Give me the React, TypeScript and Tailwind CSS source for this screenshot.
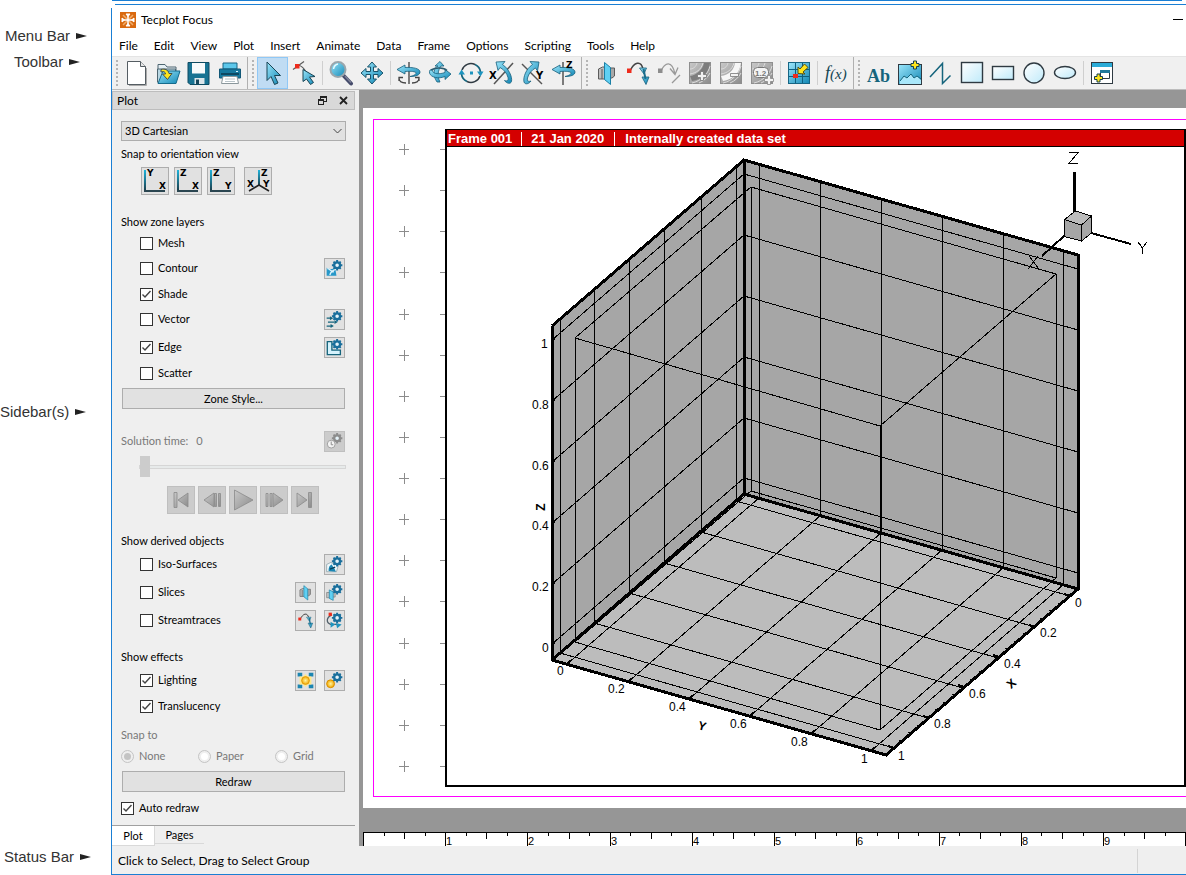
import type { ReactNode } from "react";

type Point = [number, number];

const menus = ["File", "Edit", "View", "Plot", "Insert", "Animate", "Data", "Frame", "Options", "Scripting", "Tools", "Help"];

const INK = "#2f3a42";
const TEAL = "#15647c";

/* ---------- shared svg bits ---------- */

function Gradients() {
  return (
    <svg width="0" height="0" className="absolute" aria-hidden="true">
      <defs>
        <linearGradient id="cyan" x1="0" y1="0" x2="1" y2="1">
          <stop offset="0" stopColor="#9be6fb" />
          <stop offset="1" stopColor="#1187b5" />
        </linearGradient>
        <linearGradient id="ice" x1="0" y1="0" x2="1" y2="1">
          <stop offset="0" stopColor="#ffffff" />
          <stop offset="1" stopColor="#bfeafa" />
        </linearGradient>
        <linearGradient id="gray" x1="0" y1="0" x2="1" y2="1">
          <stop offset="0" stopColor="#c9c9c9" />
          <stop offset="1" stopColor="#8b8b8b" />
        </linearGradient>
        <linearGradient id="axis" x1="0" y1="0" x2="0" y2="1">
          <stop offset="0" stopColor="#1fb4dc" />
          <stop offset="1" stopColor="#1b3a47" />
        </linearGradient>
        <radialGradient id="sun">
          <stop offset="0" stopColor="#fff3a0" />
          <stop offset="1" stopColor="#f2a900" />
        </radialGradient>
      </defs>
    </svg>
  );
}

function Icon({ children, size = 26 }: { children: ReactNode; size?: number }) {
  return (
    <svg width={size} height={size} viewBox="0 0 26 26" fill="none" aria-hidden="true" className="shrink-0">
      {children}
    </svg>
  );
}

function Gear({ x, y, color = "#1a6f9c" }: { x: number; y: number; color?: string }) {
  return (
    <g stroke={color}>
      <path
        d={`M${x - 8} ${y}h16M${x} ${y - 8}v16M${x - 5.5} ${y - 5.5}l11 11M${x + 5.5} ${y - 5.5}l-11 11`}
        strokeWidth="3"
      />
      <circle cx={x} cy={y} r="4.500" fill="#e4f2f8" strokeWidth="3.500" />
    </g>
  );
}

function Plus({ x, y }: { x: number; y: number }) {
  return (
    <path
      d={`M${x - 1.5} ${y - 4}h3v2.500h2.500v3h-2.500v2.500h-3v-2.500h-2.500v-3h2.500z`}
      fill="#fde51d"
      stroke="#17404e"
      strokeWidth="1"
    />
  );
}

/* ---------- toolbar icons ---------- */

const pageIcon = (
  <>
    <path d="M3.500 1.500h13l5 5v18h-18z" fill="#fff" stroke="#555d63" />
    <path d="M16.500 1.500v5h5" fill="#e6e6e6" stroke="#555d63" />
    <path d="M22.500 8v17.500H5" stroke="#aaa" />
  </>
);

const openIcon = (
  <>
    <path d="M3 21V4.500h7l2 2.500h9v4" fill="#e5eff4" stroke="#4e6570" />
    <path d="M2.500 22.500V9h18v4" fill="#b8d7e3" stroke="#4e6570" />
    <path d="M3 23.500L8 11h17l-4 12.500z" fill="url(#cyan)" stroke="#156b8c" />
    <path d="M6 9.500c4-1 7 0 8 4h3l-4.500 6-5-5.500h3c0-2-2-3-4.500-2z" fill="#fde51d" stroke="#44504c" />
  </>
);

const saveIcon = (
  <>
    <path d="M2 2.500h21v22H4l-2-2z" fill="#187393" stroke="#0f4b62" />
    <path d="M6 3h13v10.500H6z" fill="#f7fafb" />
    <path d="M8.500 18h10v6h-10z" fill="#dce6ea" />
    <path d="M10 19.500h3V24h-3z" fill="#16465a" />
  </>
);

const printIcon = (
  <>
    <path d="M6 3h14v6H6z" fill="#5cc7ea" stroke="#166584" />
    <path d="M2.500 9h21v9h-21z" fill="#15789e" stroke="#125877" />
    <path d="M4 14h18" stroke="#0c4862" strokeWidth="2" />
    <path d="M6 16.500h14l1.500 7h-17z" fill="#fff" stroke="#8b979c" />
    <path d="M8 19h10M8 21.500h10" stroke="#b9c4c9" />
    <path d="M19 11.500h2" stroke="#d7f4ff" />
  </>
);

const selectIcon = <path d="M7 2v18.500l4-4 3.500 8 3.500-1.500-3.500-7.500h6z" fill="url(#cyan)" stroke="#194454" />;

const adjustIcon = (
  <>
    <path d="M2 9.500l11-8M7 5c4 1 6 3 8 7" stroke="#5b5b5b" strokeWidth="1.200" />
    <path d="M4 4h4.500v4.500H4z" fill="#ee2b1c" />
    <path d="M12 9.500v12l3.500-2.500 4 5.500 3-2-4-5.500 5.500-.5z" fill="url(#cyan)" stroke="#194454" />
  </>
);

const zoomIcon = (
  <>
    <path d="M15 15l8 8.500" stroke="#454b6b" strokeWidth="4" strokeLinecap="round" />
    <path d="M17 16l6 6.500" stroke="#7c8097" strokeWidth="1.500" />
    <circle cx="10" cy="9.500" r="7.500" fill="url(#cyan)" stroke="#9aa6ac" strokeWidth="2" />
    <path d="M5.500 9c.5-3 2-4.500 4.500-5" stroke="#e8fbff" strokeWidth="1.500" />
  </>
);

const moveIcon = (
  <path
    d="M13 2l4.500 5h-3v4.500H19v-3l5 4.500-5 4.500v-3h-4.500V19h3L13 24l-4.500-5h3v-4.500H7v3L2 13l5-4.500v3h4.500V7h-3z"
    fill="url(#cyan)"
    stroke="#19536a"
  />
);

const ribbonLeft = (
  <path
    d="M1 9.500l8-4.500v2.500c8-.5 15 1 15 4.500 0 3-4 4.500-10 4.500 4-1 6-2 6-3.500C20 11.500 15 11 9 11.500V14z"
    fill="url(#cyan)"
    stroke="#175f7c"
    strokeWidth=".8"
  />
);

const tiltIcon = (
  <>
    <path d="M13 2v22" stroke="#555" strokeWidth="1.500" />
    {ribbonLeft}
    <path d="M3 18c0 4 3 5 7 5M7 17.500H3v3.500M23 18c0 4-3 5-7 5M19 17.500h4v3.500" stroke="#444" strokeWidth="1.300" />
  </>
);

const sphereIcon = (
  <>
    <path d="M10 22C5 15 7 7 11 6H8l5-4.500L17 6h-3c-3 4-4 10-1 16z" fill="url(#cyan)" stroke="#175f7c" strokeWidth=".8" />
    <path
      d="M3 10c-3 6 7 10 15 6.500v3l6-5.500-6-4.500v3C11 15 4 13.500 6 9.500z"
      fill="url(#cyan)"
      stroke="#175f7c"
      strokeWidth=".8"
    />
    <path d="M4 10c5-3 13-2.500 16 .5" stroke="#2c5c70" strokeWidth="1.500" />
  </>
);

const rollIcon = (
  <>
    <path d="M4 10a9.500 9.500 0 0 1 13-5.500M22 16a9.500 9.500 0 0 1-13 5.500" stroke={INK} strokeWidth="1.500" />
    <path d="M17 4.500a9.500 9.500 0 0 1 5.500 7.500M9 21.500a9.500 9.500 0 0 1-5.500-7.500" stroke={TEAL} strokeWidth="1.800" />
    <path d="M19 11.500h6.500l-3 5zM.5 14.500H7l-3.500-5z" fill="#1d94bf" />
    <path d="M12 11.500h3v3h-3z" fill="#1d94bf" />
  </>
);

const rotXIcon = (
  <>
    <path d="M24 3L5 24" stroke="#555" strokeWidth="1.500" />
    <path
      d="M7 2l9-.5-2.500 3c6 4 10 12 9 17-1 3-5 2-7-1 3 1 4 0 3.500-3-1-4-4-8-8-10l-2 3z"
      fill="url(#cyan)"
      stroke="#175f7c"
      strokeWidth=".8"
    />
    <text x="0" y="19" fontSize="10" fontWeight="700" fontFamily="DejaVu Sans" fill="#000">X</text>
  </>
);

const rotYIcon = (
  <>
    <path d="M2 4l20 20" stroke="#555" strokeWidth="1.500" />
    <path
      d="M19 2l-9-.5 2.500 3C6 9 3 17 4 22c1 3 5 2 7-1-3 1-4 0-3.500-3 1-4 4-8 8-10l2 3z"
      fill="url(#cyan)"
      stroke="#175f7c"
      strokeWidth=".8"
    />
    <text x="16" y="19" fontSize="10" fontWeight="700" fontFamily="DejaVu Sans" fill="#000">Y</text>
  </>
);

const rotZIcon = (
  <>
    <path d="M12 2v23" stroke="#555" strokeWidth="1.500" />
    {ribbonLeft}
    <text x="15" y="8" fontSize="9" fontWeight="700" fontFamily="DejaVu Sans" fill="#000">Z</text>
  </>
);

const sliceIcon = (
  <>
    <path d="M4.500 9l4-2h5v11l-3 1h-6z" fill="#bdbdbd" stroke="#5b5b5b" />
    <path d="M8 9v10" stroke="#5b5b5b" />
    <path d="M15 8h5.500v8L18 18h-3z" fill="#a8a8a8" stroke="#5b5b5b" />
    <path d="M10.500 2.500l6 5v17l-6-5z" fill="#5fd0f3" stroke="#1a7fa5" />
  </>
);

const streamIcon = (
  <>
    <path d="M5 11C9 2 16 0 18 9" stroke="#444" strokeWidth="1.500" />
    <path d="M2 8.500h4.500V13H2z" fill="#ee2b1c" />
    <path d="M14.500 8h7l-2.500 6zM17 17h7l-3 7.500z" fill="url(#cyan)" stroke="#175f7c" strokeWidth=".8" />
    <path d="M18.500 9l2 10" stroke="#1b6d8c" strokeWidth="2" />
  </>
);

const streamOffIcon = (
  <>
    <path d="M5 11C9 2 16 0 19 14M14 8.500l5 6 3-7M16 23l8-8" stroke="#999" strokeWidth="1.300" />
    <path d="M2 8.500h4.500V13H2z" fill="#8d8d8d" />
  </>
);

const tile = (
  <>
    <rect x="2.500" y="2.500" width="21" height="21" fill="url(#gray)" stroke="#8e8e8e" />
    <path d="M3 9c3 0 6-2 7-6M3 14c6-1 11-4 13-11M5 23c9-2 16-9 18-17M12 23c5-2 9-6 11-10" stroke="#dcdcdc" />
  </>
);

const addLevelIcon = (
  <>
    {tile}
    <path d="M17 3h6C22 12 15 20 5 21l-2-5C10 15 16 9 17 3z" fill="#7d7d7d" />
    <path d="M13.500 11.500h3v3h3v3h-3v3h-3v-3h-3v-3h3z" fill="#f2f2f2" stroke="#777" strokeWidth=".8" />
  </>
);

const removeLevelIcon = (
  <>
    {tile}
    <path d="M17 3h6C22 12 15 20 5 21l-2-5c8-1 13-6 14-13z" fill="#f7f7f7" />
    <path d="M12.500 13.500h8v3h-8z" fill="#f2f2f2" stroke="#777" strokeWidth=".8" />
  </>
);

const labelLevelIcon = (
  <>
    {tile}
    <rect x="4.500" y="7.500" width="15" height="10" rx="4" fill="#f4f4f4" stroke="#777" />
    <text x="6" y="16" fontSize="8" fontFamily="Liberation Sans" fontWeight="700" fill="#777">1.2</text>
    <path d="M18.500 15.500h3v3h3v3h-3v3h-3v-3h-3v-3h3z" fill="#f2f2f2" stroke="#888" strokeWidth=".8" />
  </>
);

const probeIcon = (
  <>
    <rect x="2.500" y="2.500" width="21" height="21" fill="url(#cyan)" stroke="#166584" />
    <path d="M9.500 3v20M16.500 3v20M3 9.500h20M3 16.500h20" stroke="#0d5f80" />
    <path d="M7 14h5v4H7z" fill="#ee2b1c" />
    <path d="M12 13.500V7l2 2 4.500-5 3.500 3.500-5 4.500 2 2z" fill="#fde51d" stroke="#59500f" />
  </>
);

const fxIcon = (
  <text x="2" y="19" fontSize="18" fontStyle="italic" fontFamily="Liberation Serif" fill="#124452">
    f<tspan fontSize="15">(x)</tspan>
  </text>
);

const textIcon = (
  <text x="1" y="22" fontSize="18" fontWeight="700" fontFamily="Liberation Serif" fill={TEAL}>Ab</text>
);

const imageIcon = (
  <>
    <rect x="1.500" y="4.500" width="23" height="20" fill="url(#cyan)" stroke={INK} />
    <path d="M3 21l4-5 3 2 4-4 3 4 3-2 4 4v4H3z" fill="#a9e7fa" />
    <path d="M3 21l4-5 3 2 4-4 3 4 3-2 4 3" stroke={TEAL} />
    <Plus x={18} y={5} />
  </>
);

const polylineIcon = <path d="M2 17L14.500 3.500V23.500L22.500 15.500" stroke={TEAL} strokeWidth="1.500" />;
const squareIcon = <rect x="2.500" y="2.500" width="21" height="20" fill="url(#ice)" stroke={INK} strokeWidth="1.400" />;
const rectIcon = <rect x="2.500" y="6.500" width="21" height="13" fill="url(#ice)" stroke={INK} strokeWidth="1.400" />;
const circleIcon = <circle cx="13" cy="13" r="10" fill="url(#ice)" stroke={INK} strokeWidth="1.400" />;
const ellipseIcon = <ellipse cx="13" cy="12.500" rx="10.500" ry="6" fill="url(#ice)" stroke={INK} strokeWidth="1.400" />;

const newFrameIcon = (
  <>
    <rect x="2.500" y="2.500" width="21" height="21" fill="#fff" stroke={INK} />
    <path d="M3 3h20v4H3z" fill="#2cacd8" />
    <path d="M11.500 10.500h9v8h-9z" fill="#fff" stroke={INK} />
    <path d="M11 10h10v3H11z" fill="#20799b" />
    <Plus x={9.500} y={18} />
  </>
);

type Tool = { name: string; icon: ReactNode; active?: boolean; off?: boolean };
type ToolItem = Tool | "line" | "grip";

const tools: ToolItem[] = [
  { name: "New layout", icon: pageIcon },
  { name: "Open layout", icon: openIcon },
  { name: "Save layout", icon: saveIcon },
  { name: "Print", icon: printIcon },
  "grip",
  { name: "Selector", icon: selectIcon, active: true },
  { name: "Adjustor", icon: adjustIcon },
  "line",
  { name: "Zoom", icon: zoomIcon },
  { name: "Translate", icon: moveIcon },
  "line",
  { name: "Rotate rollerball", icon: tiltIcon },
  { name: "Rotate spherical", icon: sphereIcon },
  { name: "Rotate twist", icon: rollIcon },
  { name: "Rotate about X", icon: rotXIcon },
  { name: "Rotate about Y", icon: rotYIcon },
  { name: "Rotate about Z", icon: rotZIcon },
  "grip",
  { name: "Slice", icon: sliceIcon },
  { name: "Add streamtrace", icon: streamIcon },
  { name: "End streamtrace", icon: streamOffIcon, off: true },
  { name: "Add contour level", icon: addLevelIcon, off: true },
  { name: "Remove contour level", icon: removeLevelIcon, off: true },
  { name: "Add contour label", icon: labelLevelIcon, off: true },
  "line",
  { name: "Probe", icon: probeIcon },
  "line",
  { name: "Extract function", icon: fxIcon },
  "grip",
  { name: "Add text", icon: textIcon },
  { name: "Add image", icon: imageIcon },
  { name: "Add polyline", icon: polylineIcon },
  { name: "Add square", icon: squareIcon },
  { name: "Add rectangle", icon: rectIcon },
  { name: "Add circle", icon: circleIcon },
  { name: "Add ellipse", icon: ellipseIcon },
  "line",
  { name: "New frame", icon: newFrameIcon },
];

function Grip() {
  return <span className="my-[3px] w-[2px] border-l-2 border-dotted border-[#b5b5b5]" />;
}

function Toolbar() {
  return (
    <div className="flex h-[34px] overflow-hidden border-t border-b border-t-[#e4e4e4] border-b-[#bdbdbd] bg-[#f0f0f0] pl-1">
      <Grip />
      <span className="w-[3px]" />
      {tools.map((tool, i) => {
        if (tool === "line") {
          return (
            <span key={i} className="flex w-[6px] shrink-0 justify-center py-1">
              <span className="w-px bg-[#cfcfcf]" />
            </span>
          );
        }
        if (tool === "grip") {
          return (
            <span key={i} className="flex w-[12px] shrink-0 gap-1 pl-[2px]">
              <span className="w-px bg-[#b0b0b0]" />
              <Grip />
            </span>
          );
        }
        return (
          <button
            key={i}
            aria-label={tool.name}
            disabled={tool.off}
            className={
              tool.active
                ? "flex w-[31px] shrink-0 items-center justify-center border border-[#90c8f6] bg-[#c0dcf3]"
                : "flex w-[31px] shrink-0 items-center justify-center"
            }
          >
            <Icon>{tool.icon}</Icon>
          </button>
        );
      })}
    </div>
  );
}

/* ---------- sidebar ---------- */

const contourGear = (
  <>
    <path d="M1 12c5 2 9 3 13 0l2 12H1z" fill="#2798c9" />
    <path d="M2 13c4 0 5 5 10 5M6 23c1-6 5-7 9-9" stroke="#dff3fb" strokeWidth="2" />
    <Gear x={17} y={8} />
  </>
);

const vectorGear = (
  <>
    <path d="M1 11h7M3 17h10M1 23h7" stroke={TEAL} strokeWidth="2" />
    <path d="M6 8l5 3-5 3zM13 14l5 3-5 3zM7 20l5 3-5 3z" fill={TEAL} />
    <Gear x={17} y={8} />
  </>
);

const edgeGear = (
  <>
    <path d="M2 4h7v13h13v7H2z" fill="#d5f2fc" stroke={TEAL} strokeWidth="2" />
    <Gear x={17} y={8} />
  </>
);

const timeGear = (
  <>
    <Gear x={17} y={8} color="#8d8d8d" />
    <circle cx="8" cy="17" r="6" fill="#f4f4f4" stroke="#a0a0a0" strokeWidth="1.500" />
    <path d="M8 13v5h3" stroke="#8d8d8d" strokeWidth="1.500" />
  </>
);

const isoGear = (
  <>
    <path d="M1 13l6-3 12 4-3 10H1z" fill="#eef8fb" stroke="#7d939c" />
    <path d="M4 23c0-7 2-9 5-10 1 4 4 4 6 11z" fill="#1b86b4" />
    <path d="M6 20l8-3" stroke="#083e55" strokeWidth="2" />
    <Gear x={17} y={8} />
  </>
);

const sliceGear = (
  <>
    <path d="M1 13h5v8H1zM10 12h4v8h-4z" fill="#c4c4c4" stroke="#777" />
    <path d="M5 9l6 3v13l-6-3z" fill="#5fd0f3" stroke="#1a7fa5" />
    <Gear x={17} y={8} />
  </>
);

const streamGear = (
  <>
    <path d="M9 4C0 9 0 16 7 19h12" stroke="#52606a" strokeWidth="2" />
    <path d="M4 1h5v5H4z" fill="#ee2b1c" />
    <path d="M7 15l7 4-7 5zM15 17l9 2-7 6z" fill="#1d94bf" />
    <Gear x={17} y={9} />
  </>
);

const sun = (
  <>
    <path d="M1 1h7v6H1zM18 1h7v6h-7zM1 19h7v6H1zM18 19h7v6h-7z" fill="#1d86b1" />
    <path d="M13 3l4 4 5 0 0 6 0 6-5 0-4 4-4-4-5 0 0-6 0-6 5 0z" fill="#ffe98c" />
    <circle cx="13" cy="13" r="6" fill="url(#sun)" stroke="#d98f00" />
  </>
);

const lightGear = (
  <>
    <circle cx="7" cy="18" r="6" fill="url(#sun)" stroke="#d98f00" strokeWidth="1.500" />
    <Gear x={17} y={8} />
  </>
);

type Side = { name: string; icon: ReactNode };

function SideButton({ name, icon, off }: Side & { off?: boolean }) {
  return (
    <button
      aria-label={name}
      disabled={off}
      className={
        off
          ? "flex size-[21px] items-center justify-center border border-[#bfbfbf] bg-[#cccccc]"
          : "flex size-[21px] items-center justify-center border border-[#adadad] bg-[#e1e1e1]"
      }
    >
      <Icon size={17}>{icon}</Icon>
    </button>
  );
}

function Check({ label, checked }: { label: string; checked?: boolean }) {
  return (
    <label className="flex items-center gap-[5px]">
      <span className="relative size-[13px]">
        <input
          type="checkbox"
          defaultChecked={checked}
          className="peer block size-[13px] appearance-none border border-[#333333] bg-white"
        />
        <svg viewBox="0 0 13 13" className="pointer-events-none absolute inset-0 hidden size-[13px] peer-checked:block">
          <path d="M2.500 6.500L5 9l5.500-6" fill="none" stroke="#444" strokeWidth="1.400" />
        </svg>
      </span>
      {label}
    </label>
  );
}

function CheckRow({ label, checked, buttons = [], gap }: { label: string; checked?: boolean; buttons?: Side[]; gap: string }) {
  return (
    <div className={`flex h-6 items-center justify-between pr-px pl-[19px] ${gap}`}>
      <Check label={label} checked={checked} />
      <div className="flex gap-2">
        {buttons.map((b) => (
          <SideButton key={b.name} {...b} />
        ))}
      </div>
    </div>
  );
}

function Heading({ children, gap }: { children: ReactNode; gap: string }) {
  return <h2 className={`h-[18px] leading-[18px] ${gap}`}>{children}</h2>;
}

const letter = { fontSize: 9, fontWeight: 700, fontFamily: "DejaVu Sans", fill: "#000" };

function SnapButton({ up, right }: { up: string; right: string }) {
  return (
    <button aria-label={`${up}${right} view`} className="size-[28px] border border-[#adadad] bg-[#e1e1e1]">
      <svg width="26" height="26" viewBox="0 0 26 26">
        <rect x="2" y="2" width="2" height="21" fill="url(#axis)" />
        <rect x="2" y="22" width="21" height="2" fill="#2a4550" />
        <text x="5" y="8" {...letter}>{up}</text>
        <text x="17" y="21" {...letter}>{right}</text>
      </svg>
    </button>
  );
}

const playback = [
  { name: "First", d: "M6 5.500h3v15H6zM20 6v14l-10-7z" },
  { name: "Back", d: "M5 13l10-7v14zM15.500 6.500h2v13h-2zM19.500 6.500h2v13h-2z" },
  { name: "Play", d: "M4.500 3v20L23 13z" },
  { name: "Forward", d: "M5 6.500h2v13H5zM9 6.500h2v13H9zM12 6v14l10-7z" },
  { name: "Last", d: "M5 6v14l10-7zM16.500 5.500h3v15h-3z" },
];

function Sidebar() {
  return (
    <aside className="flex w-[247px] shrink-0 flex-col pt-px text-[11px] leading-4 text-black">
      <div className="mr-1 flex h-[19px] items-center justify-between border border-[#bdbdbd] bg-[#d9d9d9] pr-[6px] pl-1">
        <span className="text-[12px]">Plot</span>
        <span className="flex gap-3">
          <button aria-label="Float panel">
            <svg width="9" height="9" viewBox="0 0 9 9" fill="none" stroke="#222" shapeRendering="crispEdges">
              <path d="M2.500 3V.5h6v5H6M.5 3.500h5v5h-5zM2 1h6M1 4h5" />
            </svg>
          </button>
          <button aria-label="Close panel">
            <svg width="9" height="9" viewBox="0 0 9 9" stroke="#222" strokeWidth="1.800">
              <path d="M1 1l7 7M8 1L1 8" />
            </svg>
          </button>
        </span>
      </div>

      <div className="flex flex-col pr-[13px] pl-[9px]">
        <div className="relative mt-[11px]">
          <select aria-label="Plot type" className="block h-5 w-full appearance-none border border-[#adadad] bg-[#e1e1e1] pl-[3px]">
            <option>3D Cartesian</option>
            <option>2D Cartesian</option>
            <option>XY Line</option>
          </select>
          <svg viewBox="0 0 9 6" className="pointer-events-none absolute top-[7px] right-1 w-[9px]" fill="none" stroke="#444">
            <path d="M.5 1l4 4 4-4" />
          </svg>
        </div>

        <Heading gap="mt-[4px]">Snap to orientation view</Heading>
        <div className="mt-1 flex gap-[5px] pl-5">
          <SnapButton up="Y" right="X" />
          <SnapButton up="Z" right="X" />
          <SnapButton up="Z" right="Y" />
          <button aria-label="Default 3D view" className="ml-1 size-[28px] border border-[#adadad] bg-[#e1e1e1]">
            <svg width="26" height="26" viewBox="0 0 26 26">
              <rect x="13" y="2" width="2" height="16" fill="url(#axis)" />
              <path d="M14 17L4 23M14 17l10 6" stroke="#222" strokeWidth="1.600" />
              <text x="16" y="8" {...letter}>Z</text>
              <text x="2" y="19" {...letter}>X</text>
              <text x="18" y="19" {...letter}>Y</text>
            </svg>
          </button>
        </div>

        <Heading gap="mt-[18px]">Show zone layers</Heading>
        <CheckRow gap="" label="Mesh" />
        <CheckRow gap="mt-px" label="Contour" buttons={[{ name: "Contour details", icon: contourGear }]} />
        <CheckRow gap="mt-[2px]" label="Shade" checked />
        <CheckRow gap="mt-px" label="Vector" buttons={[{ name: "Vector details", icon: vectorGear }]} />
        <CheckRow gap="mt-1" label="Edge" checked buttons={[{ name: "Edge details", icon: edgeGear }]} />
        <CheckRow gap="mt-[2px]" label="Scatter" />
        <button className="mx-px mt-[3px] h-[21px] border border-[#adadad] bg-[#e1e1e1]">Zone Style...</button>

        <div className="mt-5 flex h-6 items-center justify-between pr-px text-[#787878]">
          <span className="flex gap-2">
            <span>Solution time:</span>
            <span>0</span>
          </span>
          <SideButton name="Time details" icon={timeGear} off />
        </div>
        <input
          type="range"
          aria-label="Solution time"
          disabled
          defaultValue={0}
          className="mt-[3px] ml-[18px] h-[21px] appearance-none bg-transparent [&::-webkit-slider-runnable-track]:h-1 [&::-webkit-slider-runnable-track]:border [&::-webkit-slider-runnable-track]:border-[#d6d6d6] [&::-webkit-slider-runnable-track]:bg-[#e7eaea] [&::-webkit-slider-thumb]:-mt-[10px] [&::-webkit-slider-thumb]:h-[21px] [&::-webkit-slider-thumb]:w-[10px] [&::-webkit-slider-thumb]:appearance-none [&::-webkit-slider-thumb]:bg-[#cccccc]"
        />
        <div className="mt-[9px] flex gap-[3px] pl-[46px]">
          {playback.map((p) => (
            <button key={p.name} aria-label={p.name} disabled className="size-[28px] border border-[#bfbfbf] bg-[#cccccc]">
              <svg width="26" height="26" viewBox="0 0 26 26">
                <path d={p.d} fill="url(#gray)" stroke="#8a8a8a" strokeWidth=".8" />
              </svg>
            </button>
          ))}
        </div>

        <Heading gap="mt-[18px]">Show derived objects</Heading>
        <CheckRow gap="mt-[2px]" label="Iso-Surfaces" buttons={[{ name: "Iso-surface details", icon: isoGear }]} />
        <CheckRow
          gap="mt-1"
          label="Slices"
          buttons={[
            { name: "Place slice", icon: sliceIcon },
            { name: "Slice details", icon: sliceGear },
          ]}
        />
        <CheckRow
          gap="mt-1"
          label="Streamtraces"
          buttons={[
            { name: "Place streamtrace", icon: streamIcon },
            { name: "Streamtrace details", icon: streamGear },
          ]}
        />

        <Heading gap="mt-4">Show effects</Heading>
        <CheckRow
          gap="mt-[2px]"
          label="Lighting"
          checked
          buttons={[
            { name: "Light source", icon: sun },
            { name: "Lighting details", icon: lightGear },
          ]}
        />
        <CheckRow gap="mt-[2px]" label="Translucency" checked />

        <fieldset disabled className="mt-2 text-[#787878]">
          <legend className="h-[18px] leading-[18px]">Snap to</legend>
          <div className="flex h-6 items-center">
            {["None", "Paper", "Grid"].map((name, i) => (
              <label key={name} className="flex w-[77px] items-center gap-[5px]">
                <input
                  type="radio"
                  name="snap"
                  defaultChecked={i === 0}
                  className="size-[13px] appearance-none rounded-full border border-[#c4c4c4] bg-white bg-clip-content p-[2px] checked:bg-[#c4c4c4]"
                />
                {name}
              </label>
            ))}
          </div>
        </fieldset>
        <button className="mx-px mt-[3px] h-[21px] border border-[#adadad] bg-[#e1e1e1]">Redraw</button>
        <div className="mt-[6px] flex h-5 items-center">
          <Check label="Auto redraw" checked />
        </div>
      </div>

      <div className="mt-[7px] mr-1 flex items-start border-t border-[#a0a0a0]">
        <button className="h-5 w-[43px] border-r border-b border-[#d9d9d9] bg-white">Plot</button>
        <button className="h-[18px] w-[49px] border-b border-[#d9d9d9]">Pages</button>
      </div>
    </aside>
  );
}

/* ---------- 3D plot ---------- */

const G: Point = [744, 494]; // back corner of the floor
const U: Point = [-192, 166]; // along X
const V: Point = [334, 95]; // along Y
const H = 334; // height of the axes box

function at(u: number, v: number, h: number): Point {
  return [Math.round(G[0] + u * U[0] + v * V[0]), Math.round(G[1] + u * U[1] + v * V[1] - h * H)];
}

function poly(...points: Point[]) {
  return points.map((p) => p.join(",")).join(" ");
}

const xs = [0.043, 0.226, 0.415, 0.597, 0.78, 0.96];
const ys = [0.046, 0.227, 0.409, 0.592, 0.774, 0.954];
const zs = [0.047, 0.229, 0.411, 0.593, 0.775, 0.957];

const back: Point = [751, 491];
const left: Point = [575, 642];
const front: Point = [880, 730];
const right: Point = [1056, 578];
const up = (p: Point): Point => [p[0], p[1] - 304];

const labels: [string, number, number][] = [
  ["1", 541, 348], ["0.8", 532, 409], ["0.6", 532, 470], ["0.4", 532, 530], ["0.2", 532, 591], ["0", 542, 652],
  ["0", 557, 675], ["0.2", 608, 693], ["0.4", 669, 711], ["0.6", 730, 728], ["0.8", 791, 746], ["1", 861, 763],
  ["0", 1075, 607], ["0.2", 1040, 637], ["0.4", 1004, 668], ["0.6", 969, 698], ["0.8", 934, 728], ["1", 898, 760],
];

function PlotCube() {
  const minor = Array.from({ length: 21 }, (_, i) => 0.043 + (i * 0.917) / 20);
  return (
    <svg width="737" height="638" viewBox="447 147 737 638" className="block" role="img" aria-label="3D Cartesian plot">
      <g shapeRendering="crispEdges" fill="none" stroke="#000">
        <polygon points={poly(at(1, 0, 0), at(0, 0, 0), at(0, 0, 1), at(1, 0, 1))} fill="#a6a6a6" stroke="none" />
        <polygon points={poly(at(0, 0, 0), at(0, 1, 0), at(0, 1, 1), at(0, 0, 1))} fill="#a6a6a6" stroke="none" />
        <polygon points={poly(at(0, 0, 0), at(0, 1, 0), at(1, 1, 0), at(1, 0, 0))} fill="#bcbcbc" stroke="none" />

        {xs.map((x) => (
          <polyline key={x} points={poly(at(x, 0, 1), at(x, 0, 0), at(x, 1, 0))} />
        ))}
        {ys.map((y) => (
          <polyline key={y} points={poly(at(0, y, 1), at(0, y, 0), at(1, y, 0))} />
        ))}
        {zs.map((z) => (
          <polyline key={z} points={poly(at(1, 0, z), at(0, 0, z), at(0, 1, z))} />
        ))}

        <polygon points={poly(up(back), up(left), up(front), up(right))} />
        <polygon points={poly(back, left, front, right)} />
        {[back, left, front, right].map((p) => (
          <polyline key={p[0]} points={poly(p, up(p))} />
        ))}

        {minor.map((m, i) => {
          const [x, y] = at(m, 1, 0);
          const size = i % 4 === 0 ? 6 : 3;
          return <path key={m} d={`M${x} ${y}l-${size} -${size / 3}`} strokeWidth={i % 4 === 0 ? 2 : 1} />;
        })}
        {ys.map((v) => {
          const [x, y] = at(1, v, 0);
          return <path key={v} d={`M${x} ${y}l3 -3`} strokeWidth="2" />;
        })}
        {zs.map((z) => {
          const [x, y] = at(1, 0, z);
          return <path key={z} d={`M${x} ${y}l3 -2`} strokeWidth="2" />;
        })}

        <polyline points={poly(at(1, 0, 1), at(0, 0, 1), at(0, 1, 1), at(0, 1, 0), at(1, 1, 0), at(1, 0, 0), at(1, 0, 1))} strokeWidth="3" />
        <polyline points={poly(at(1, 0, 0), at(0, 0, 0), at(0, 1, 0))} strokeWidth="3" />
        <polyline points={poly(at(0, 0, 0), at(0, 0, 1))} strokeWidth="3" />

        <path d="M1074.500 172v40" strokeWidth="3" />
        <path d="M1091 233l40 11M1064 236l-22 20" strokeWidth="2" />
        <path d="M1064.500 219.500v17l17 4.500v-16z" fill="#a6a6a6" />
        <path d="M1064.500 219.500l11-8.500 16 5-10 9z" fill="#bcbcbc" />
        <path d="M1081.500 225v16l10-8v-17z" fill="#a6a6a6" />
        <path d="M1069 152.500h9l-9 11h9" />
        <path d="M1138 242l4.500 6 4.500-6M1142.500 248v6" />
        <path d="M1029 256l10 13M1038 256l-10 13" />
      </g>

      <g fontFamily="Liberation Sans, sans-serif" fontSize="12" fill="#000">
        {labels.map(([text, x, y]) => (
          <text key={`${x}-${y}`} x={x} y={y}>{text}</text>
        ))}
        <g fontWeight="700" textAnchor="middle">
          <text transform="translate(545 507) rotate(-90)">Z</text>
          <text transform="translate(701 730) rotate(15)">Y</text>
          <text transform="translate(1010 685) rotate(-41)" dy="4" dx="2">X</text>
        </g>
      </g>
    </svg>
  );
}

function GridMarks() {
  const rows = Array.from({ length: 16 }, (_, i) => Math.round(149 + i * 41.13));
  return (
    <svg width="71" height="676" viewBox="374 120 71 676" className="block shrink-0" shapeRendering="crispEdges" aria-hidden="true">
      {rows.map((y) => (
        <path key={y} d={`M399 ${y}.5h10M404.500 ${y - 5}v11M440 ${y}.5h5`} stroke="#8c8c8c" />
      ))}
    </svg>
  );
}

function Ruler() {
  const ticks = Array.from({ length: 41 }, (_, i) => i);
  return (
    <div className="ml-1 h-[14px] overflow-hidden border-t border-l border-black bg-white">
      <svg width="824" height="13" viewBox="1 0 824 13" className="block" shapeRendering="crispEdges">
        {ticks.map((i) => {
          const x = Math.round(i * 20.56);
          const len = i % 4 === 0 ? 13 : i % 2 === 0 ? 6 : 3;
          return <path key={i} d={`M${x}.5 0v${len}`} stroke="#000" />;
        })}
        {[1, 2, 3, 4, 5, 6, 7, 8, 9].map((n) => (
          <text key={n} x={Math.round(n * 82.24) + 1} y="12" fontSize="11" fontFamily="Liberation Sans, sans-serif">{n}</text>
        ))}
      </svg>
    </div>
  );
}

function Workspace() {
  return (
    <main className="min-w-0 flex-1 bg-[#969696] pt-[18px]">
      <div className="ml-1 overflow-hidden bg-white py-[11px] pl-[10px]">
        <div className="flex border-t border-b border-l border-[#ff00ff]">
          <GridMarks />
          <section className="my-[9px] min-w-0 flex-1 overflow-hidden border-2 border-t border-black bg-white">
            <header className="flex h-[17px] items-center border-b border-black bg-[#d40000] pt-[2px] font-['Liberation_Sans',sans-serif] text-[13px] leading-4 font-bold text-white">
              <span className="pl-px">Frame 001</span>
              <span className="mx-[9px] h-[14px] w-px bg-white" />
              <span>21 Jan 2020</span>
              <span className="mx-[10px] h-[14px] w-px bg-white" />
              <span>Internally created data set</span>
            </header>
            <PlotCube />
          </section>
        </div>
      </div>
      <div className="h-6" />
      <Ruler />
    </main>
  );
}

/* ---------- window ---------- */

function AppWindow() {
  return (
    <div className="min-w-0 flex-1 bg-white font-[Lato,sans-serif]">
      <div className="mr-1 ml-px h-px bg-[#1a7fd4]" />
      <div className="mt-[3px] ml-1 h-px bg-[#1a7fd4]" />
      <div className="mt-[3px] border-b border-l border-[#1a7fd4]">
        <div className="flex h-[23px] items-center gap-[5px] pr-[3px] pl-2 text-[12px]">
          <svg width="16" height="16" viewBox="0 0 16 16">
            <rect width="16" height="16" fill="#d9690f" />
            <path d="M3 3l10 10M13 3L3 13" stroke="#f0ac6b" strokeWidth="1.500" />
            <path d="M8 3v10M3 8h10" stroke="#fff" strokeWidth="1.500" />
            <path d="M8 4.500L6 2h4zM8 11.500L6 14h4zM4.500 8L2 6v4zM11.500 8L14 6v4z" fill="#fff" stroke="#fff" />
          </svg>
          <h1>Tecplot Focus</h1>
          <button aria-label="Minimize" className="ml-auto flex h-4 w-[10px] items-center">
            <span className="h-px w-[10px] bg-black" />
          </button>
        </div>
        <nav className="flex h-[25px] items-center gap-4 pt-1 pl-[7px] text-[12px] leading-4">
          {menus.map((m) => (
            <button key={m}>{m}</button>
          ))}
        </nav>
        <Toolbar />
        <div className="flex bg-[#efefef]">
          <Sidebar />
          <Workspace />
        </div>
        <footer className="flex h-7 items-center bg-[#efefef] pt-px pl-[6px] text-[12px]">
          <span>Click to Select, Drag to Select Group</span>
          <span className="mr-[48px] ml-auto h-6 w-px bg-[#d4d4d4]" />
        </footer>
      </div>
    </div>
  );
}

function Callout({ children, className }: { children: ReactNode; className: string }) {
  return (
    <p className={`flex h-6 items-center gap-[6px] ${className}`}>
      {children}
      <svg width="11" height="6" viewBox="0 0 11 6" aria-hidden="true">
        <path d="M0 0l11 3L0 6z" fill="#222" />
      </svg>
    </p>
  );
}

export default function App() {
  return (
    <div className="flex overflow-hidden bg-white">
      <Gradients />
      <div className="w-[111px] shrink-0 font-['Liberation_Sans',sans-serif] text-[15px] whitespace-nowrap text-[#333333]">
        <Callout className="mt-6 pl-[5px]">Menu Bar</Callout>
        <Callout className="mt-[2px] pl-[14px]">Toolbar</Callout>
        <Callout className="mt-[326px]">Sidebar(s)</Callout>
        <Callout className="mt-[421px] pl-1">Status Bar</Callout>
      </div>
      <AppWindow />
    </div>
  );
}
